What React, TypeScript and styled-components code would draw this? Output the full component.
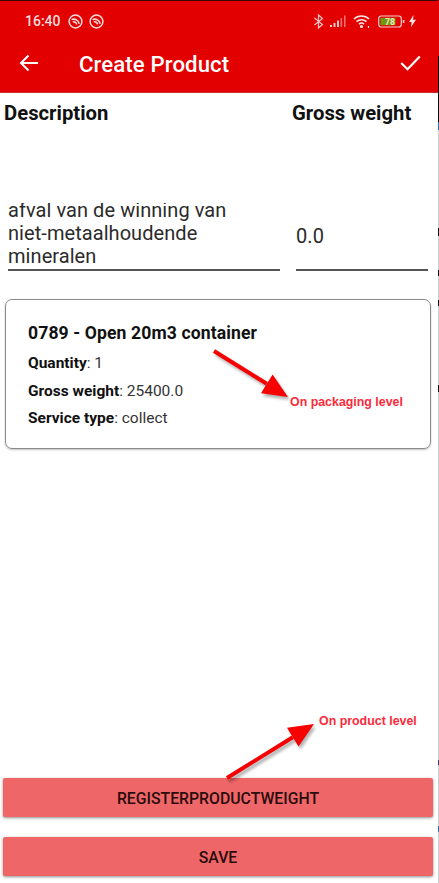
import React from "react";
import styled, { createGlobalStyle } from "styled-components";

const Global = createGlobalStyle`
  html, body { margin: 0; padding: 0; background: #fff; }
  #root {
    width: 439px;
    height: 883px;
    overflow: hidden;
    background: linear-gradient(
      to bottom,
      #e30000 0 56px,
      #0a0a0a 56px 122px,
      #2f6fb5 122px 130px,
      #c9d0d0 130px 228px,
      #111 228px 236px,
      #c9d0d0 236px 270px,
      #111 270px 276px,
      #c9d0d0 276px 300px,
      #111 300px 306px,
      #c9d0d0 306px 385px,
      #111 385px 392px,
      #c9d0d0 392px 760px,
      #4a3a6a 760px 765px,
      #c9d0d0 765px 826px,
      #2f6fb5 826px 832px,
      #c9d0d0 832px 883px
    );
  }
`;

const Screen = styled.div`
  position: relative;
  width: 438px;
  height: 883px;
  display: flex;
  flex-direction: column;
  background: #fff;
  font-family: Roboto, "Liberation Sans", sans-serif;
  color: #111;
  overflow: hidden;
`;

const Header = styled.header`
  height: 93px;
  flex: none;
  background: #e30000;
  border-top: 1px solid #3a0505;
  box-sizing: border-box;
  border-bottom: 1px solid #c63030;
  color: #fff;
  display: flex;
  flex-direction: column;
`;

const StatusBar = styled.div`
  height: 40px;
  flex: none;
  padding: 0 22px 0 25px;
  display: flex;
  align-items: center;
  color: #f8dcdc;
`;

const Time = styled.span`
  font-size: 14px;
  font-weight: 500;
  margin-right: 7px;
`;

const StatusGap = styled.div`
  flex: 1;
`;

const StatusIcons = styled.div`
  display: flex;
  align-items: center;
  gap: 6px;
`;

const AppBar = styled.div`
  flex: 1;
  display: flex;
  align-items: center;
  padding: 0 17px 8px 19px;
`;

const Title = styled.h1`
  flex: 1;
  margin: 2px 0 0 40px;
  font-size: 22.2px;
  font-weight: 500;
  letter-spacing: 0.1px;
`;

const FormGrid = styled.div`
  display: grid;
  grid-template-columns: 288px 136px;
  padding: 0 0 0 4px;
`;

const ColumnHead = styled.div`
  font-size: 20.3px;
  font-weight: 700;
  line-height: 24px;
  padding-top: 8px;
  height: 99px;
  box-sizing: border-box;
`;

const FieldText = styled.div`
  font-size: 20px;
  line-height: 23px;
  color: #2b2b2b;
  letter-spacing: 0.06px;
  margin-left: 4px;
  width: 272px;
  height: 79px;
  box-sizing: border-box;
  padding-top: 7px;
  border-bottom: 2px solid #555;
`;

const ClippedValue = styled.div`
  height: 70px;
  overflow: hidden;
  clip-path: inset(4px 0 0 0);
`;

const FieldNumber = styled(FieldText)`
  margin-left: 4px;
  width: 132px;
  padding: 32px 0 0 0;
  line-height: 24px;
`;

const Card = styled.section`
  margin: 28px 0 0 5px;
  width: 426px;
  height: 150px;
  box-sizing: border-box;
  border: 1.5px solid #8a8a8a;
  border-radius: 7px;
  box-shadow: 0 1px 2px rgba(0, 0, 0, 0.25);
  padding: 21px 0 0 22px;
`;

const CardTitle = styled.div`
  font-size: 17.6px;
  font-weight: 700;
  line-height: 24px;
  margin-bottom: 8px;
  letter-spacing: 0.1px;
`;

const CardRow = styled.div`
  font-size: 15.5px;
  line-height: 20px;
  margin-bottom: 7.7px;
  color: #333;
  b { font-weight: 700; color: #111; }
`;

const Footer = styled.footer`
  margin-top: auto;
  padding: 0 5px 7px 3px;
  display: flex;
  flex-direction: column;
  gap: 20px;
`;

const Button = styled.button`
  display: block;
  width: 430px;
  height: 39px;
  border: 0;
  border-radius: 2px;
  padding: 2px 0 0;
  background: #ef6668;
  color: #2a0c0d;
  font-family: inherit;
  font-size: 15.8px;
  font-weight: 500;
  box-shadow: 0 1px 3px rgba(0, 0, 0, 0.45);
`;

const Annotation = styled.span<{ $x: number; $y: number }>`
  position: absolute;
  left: ${(p) => p.$x}px;
  top: ${(p) => p.$y}px;
  font-family: "Liberation Sans", Arial, sans-serif;
  font-size: 12.4px;
  font-weight: 700;
  line-height: 14px;
  color: #fb2a3a;
  white-space: nowrap;
`;

const Overlay = styled.svg`
  position: absolute;
  left: 0;
  top: 0;
  pointer-events: none;
`;

const Ring = () => (
  <svg width="15" height="15" viewBox="0 0 15 15" fill="none" stroke="#f8dcdc" strokeWidth="1.5">
    <circle cx="7.5" cy="7.5" r="6.4" />
    <path d="M3.6 5.6a5.5 5.5 0 0 1 7.6 4.2M4.8 8a2.8 2.8 0 0 1 3.8 2.4" strokeWidth="1.5" />
  </svg>
);

const Arrow = ({ x1, y1, x2, y2 }: { x1: number; y1: number; x2: number; y2: number }) => {
  const a = Math.atan2(y2 - y1, x2 - x1);
  const len = 25;
  const w = 11;
  const bx = x2 - len * Math.cos(a);
  const by = y2 - len * Math.sin(a);
  const nx = -Math.sin(a);
  const ny = Math.cos(a);
  const head = `${x2},${y2} ${bx + nx * w},${by + ny * w} ${bx - nx * w},${by - ny * w}`;
  return (
    <g>
      <g opacity="0.3" transform="translate(2 3)" style={{ filter: "blur(1.5px)" }}>
        <line x1={x1} y1={y1} x2={bx} y2={by} stroke="#000" strokeWidth="4" />
        <polygon points={head} fill="#000" />
      </g>
      <line x1={x1} y1={y1} x2={bx} y2={by} stroke="#f60000" strokeWidth="4" />
      <polygon points={head} fill="#f60000" />
    </g>
  );
};

export default function App() {
  return (
    <Screen>
      <Global />
      <Header>
        <StatusBar>
          <Time>16:40</Time>
          <StatusIcons>
            <Ring />
            <Ring />
          </StatusIcons>
          <StatusGap />
          <StatusIcons>
            <svg width="11" height="15" viewBox="0 0 11 15" fill="none" stroke="#f4c8c8" strokeWidth="1.2">
              <path d="M1.5 4l8 6.5-4 3.5V1l4 3.5-8 6.5" />
            </svg>
            <svg width="17" height="13" viewBox="0 0 17 13" fill="#f4c8c8">
              <rect x="0" y="10" width="2" height="2" />
              <rect x="3.5" y="8" width="2" height="4" />
              <rect x="7" y="5.5" width="2" height="6.5" />
              <rect x="10.5" y="3" width="1.6" height="9" opacity="0.55" />
              <rect x="14" y="0.5" width="1.6" height="11.5" opacity="0.55" />
            </svg>
            <svg width="19" height="15" viewBox="0 0 19 15" fill="none" stroke="#fbe6e6" strokeWidth="1.6">
              <path d="M1 5a11 11 0 0 1 15 0M3.5 7.7a7.3 7.3 0 0 1 10 0M6 10.2a3.6 3.6 0 0 1 5 0" />
              <circle cx="8.5" cy="12.5" r="0.8" fill="#fbe6e6" />
              <path d="M15.5 12v2" strokeWidth="1.2" />
            </svg>
            <svg width="27" height="13" viewBox="0 0 27 13">
              <rect x="0.7" y="1" width="22.6" height="11" rx="2.5" fill="none" stroke="#f6d0d0" strokeWidth="1.2" />
              <rect x="2.5" y="2.8" width="15" height="7.4" fill="#6f9a10" />
              <rect x="24.8" y="5" width="1.6" height="3" fill="#f6d0d0" />
              <text x="12" y="10" textAnchor="middle" fontSize="8.5" fontWeight="700" fontFamily="Roboto" fill="#f4e8c0">78</text>
            </svg>
            <svg width="7" height="12" viewBox="0 0 7 12" fill="#fbe0e0" style={{ marginLeft: -2 }}>
              <path d="M4.5 0L0 7h2.6L2 12l5-7.2H4.1z" />
            </svg>
          </StatusIcons>
        </StatusBar>
        <AppBar>
          <svg width="20" height="18" viewBox="0 0 20 18" fill="none" stroke="#fff" strokeWidth="2">
            <path d="M19 9H2M9.5 1.5L2 9l7.5 7.5" />
          </svg>
          <Title>Create Product</Title>
          <svg width="21" height="16" viewBox="0 0 21 16" fill="none" stroke="#fff" strokeWidth="2.2">
            <path d="M1.2 8l6.3 6.3L19.8 1.5" />
          </svg>
        </AppBar>
      </Header>
      <FormGrid>
        <ColumnHead>Description</ColumnHead>
        <ColumnHead>Gross weight</ColumnHead>
        <FieldText>
          <ClippedValue>
            afval van de winning van
            <br />
            niet-metaalhoudende
            <br />
            mineralen
          </ClippedValue>
        </FieldText>
        <FieldNumber>0.0</FieldNumber>
      </FormGrid>
      <Card>
        <CardTitle>0789 - Open 20m3 container</CardTitle>
        <CardRow>
          <b>Quantity</b>: 1
        </CardRow>
        <CardRow>
          <b>Gross weight</b>: 25400.0
        </CardRow>
        <CardRow>
          <b>Service type</b>: collect
        </CardRow>
      </Card>
      <Footer>
        <Button>REGISTERPRODUCTWEIGHT</Button>
        <Button>SAVE</Button>
      </Footer>
      <Overlay width="439" height="883">
        <Arrow x1={214} y1={351} x2={288} y2={397} />
        <Arrow x1={227} y1={778} x2={314} y2={724} />
      </Overlay>
      <Annotation $x={290} $y={395}>On packaging level</Annotation>
      <Annotation $x={319} $y={714}>On product level</Annotation>
    </Screen>
  );
}
